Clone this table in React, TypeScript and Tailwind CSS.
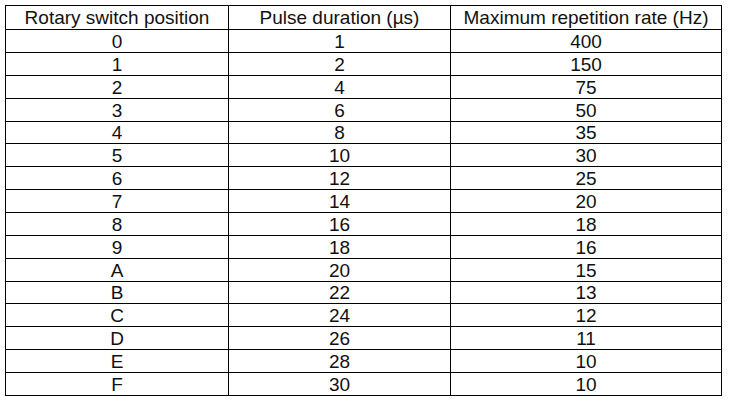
import React from "react";

const rows: [string, string, string][] = [
  ["0", "1", "400"],
  ["1", "2", "150"],
  ["2", "4", "75"],
  ["3", "6", "50"],
  ["4", "8", "35"],
  ["5", "10", "30"],
  ["6", "12", "25"],
  ["7", "14", "20"],
  ["8", "16", "18"],
  ["9", "18", "16"],
  ["A", "20", "15"],
  ["B", "22", "13"],
  ["C", "24", "12"],
  ["D", "26", "11"],
  ["E", "28", "10"],
  ["F", "30", "10"],
];

// line-to-line heights for data rows (header is 24)
const heights = ["h-[23px]", "h-[23px]", "h-[23px]", "h-[23px]", "h-[22px]", "h-[23px]", "h-[23px]", "h-[23px]", "h-[23px]", "h-[23px]", "h-[23px]", "h-[22px]", "h-[23px]", "h-[23px]", "h-[23px]", "h-[23px]"];

function Row({ cells, h }: { cells: [string, string, string]; h: string }) {
  return (
    <div className={`grid grid-cols-[223px_222px_271px] border-b border-black ${h}`}>
      {cells.map((c, i) => (
        <div key={i} className="flex items-center justify-center border-r border-black leading-none">
          {c}
        </div>
      ))}
    </div>
  );
}

export default function App() {
  return (
    <div className="w-[729px] h-[402px] bg-white pt-[5px] pl-[5px] text-[19px] text-[#111]" style={{ fontFamily: '"Liberation Sans", Arial, sans-serif' }}>
      <div className="w-[717px] border-t border-l border-black">
        <Row cells={["Rotary switch position", "Pulse duration (µs)", "Maximum repetition rate (Hz)"]} h="h-[24px]" />
        {rows.map((r, i) => (
          <Row key={i} cells={r} h={heights[i]} />
        ))}
      </div>
    </div>
  );
}
